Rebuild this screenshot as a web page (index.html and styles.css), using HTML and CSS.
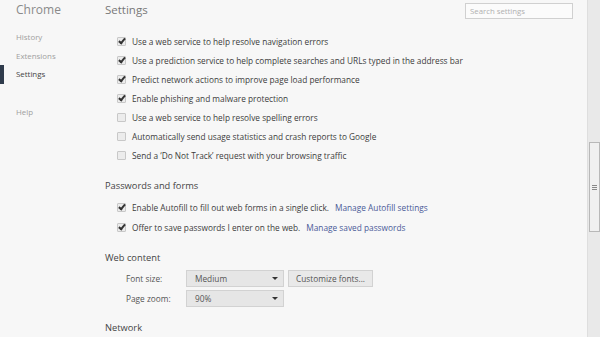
FILE: index.html
```html
<!DOCTYPE html>
<html lang="en">
<head>
  <meta charset="UTF-8" />
  <title>Settings</title>
  <link rel="stylesheet" href="styles.css">
</head>
<body>
  <div class="page">
    <nav class="side">
      <div class="brand">Chrome</div>
      <ul class="nav">
        <li>History</li>
        <li>Extensions</li>
        <li class="active">Settings</li>
        <li class="help">Help</li>
      </ul>
    </nav>

    <main class="main">
      <header class="top">
        <h1>Settings</h1>
        <div class="search">Search settings</div>
      </header>

      <div class="group privacy">
        <div class="row"><span class="box on"></span>Use a web service to help resolve navigation errors</div>
        <div class="row"><span class="box on"></span>Use a prediction service to help complete searches and URLs typed in the address bar</div>
        <div class="row"><span class="box on"></span>Predict network actions to improve page load performance</div>
        <div class="row"><span class="box on"></span>Enable phishing and malware protection</div>
        <div class="row"><span class="box"></span>Use a web service to help resolve spelling errors</div>
        <div class="row"><span class="box"></span>Automatically send usage statistics and crash reports to Google</div>
        <div class="row"><span class="box"></span>Send a ‘Do Not Track’ request with your browsing traffic</div>
      </div>

      <h2>Passwords and forms</h2>
      <div class="group forms">
        <div class="row"><span class="box on"></span>Enable Autofill to fill out web forms in a single click.<a class="link">Manage Autofill settings</a></div>
        <div class="row"><span class="box on"></span>Offer to save passwords I enter on the web.<a class="link">Manage saved passwords</a></div>
      </div>

      <h2>Web content</h2>
      <div class="group content">
        <div class="field">
          <span class="label">Font size:</span>
          <span class="select">Medium<span class="arrow"></span></span>
          <span class="btn">Customize fonts...</span>
        </div>
        <div class="field">
          <span class="label">Page zoom:</span>
          <span class="select">90%<span class="arrow"></span></span>
        </div>
      </div>

      <h2 class="last">Network</h2>
    </main>

    <div class="scrollbar"><div class="thumb"><span class="grip"></span></div></div>
  </div>
</body>
</html>
```

FILE: styles.css
```css
html, body {
  margin: 0;
  height: 100%;
  overflow: hidden;
}
body {
  font-family: "Open Sans", "Noto Sans", sans-serif;
  font-size: 8.3px;
  color: #3c3c3c;
  background: #f7f7f7;
}
.page {
  display: flex;
  height: 337px;
}
.side {
  width: 105px;
  flex: none;
}
.brand {
  padding: 1px 0 0 16px;
  height: 21px;
  line-height: 18px;
  font-size: 12px;
  color: #8a8a8a;
}
.nav {
  list-style: none;
  margin: 6px 0 0;
  padding: 0;
}
.nav li {
  height: 18.5px;
  line-height: 18.5px;
  padding-left: 16px;
  color: #a0a0a0;
  font-size: 7.9px;
}
.nav li.active {
  color: #444;
  padding-left: 12px;
  border-left: 4px solid #2f3b4c;
}
.nav li.help {
  margin-top: 19px;
}
.main {
  flex: 1;
  min-width: 0;
}
.top {
  display: flex;
  align-items: center;
  justify-content: space-between;
  height: 22px;
  padding-right: 14px;
}
h1 {
  margin: 0 0 3px;
  font-weight: normal;
  font-size: 11.5px;
  color: #777;
}
.search {
  width: 98px;
  height: 14px;
  line-height: 14px;
  padding: 0 4px;
  border: 1px solid #d0d0d0;
  background: #fbfbfb;
  color: #b0b0b0;
  font-size: 7.8px;
}
.group {
  padding-left: 12px;
}
.privacy {
  margin-top: 10px;
}
.row {
  display: flex;
  align-items: center;
  height: 19px;
  white-space: nowrap;
}
.forms {
  margin-top: 2px;
}
.forms .row {
  height: 20px;
}
.box {
  width: 7px;
  height: 7px;
  margin-right: 6px;
  border: 1px solid #c8c8c8;
  border-radius: 1px;
  background: #ececec;
  position: relative;
}
.box.on::after {
  content: "";
  position: absolute;
  left: 2px;
  top: -1px;
  width: 2px;
  height: 5px;
  border: solid #333;
  border-width: 0 2px 2px 0;
  transform: rotate(40deg);
}
.link {
  color: #4a5a98;
  margin-left: 6px;
}
h2 {
  margin: 12px 0 0;
  height: 18px;
  line-height: 18px;
  font-weight: normal;
  font-size: 9.3px;
  color: #444;
}
.content {
  margin-top: 1px;
  padding-left: 21px;
}
.field {
  display: flex;
  align-items: center;
  height: 20px;
}
.label {
  width: 60px;
  color: #555;
}
.select {
  display: flex;
  align-items: center;
  justify-content: space-between;
  box-sizing: border-box;
  width: 98px;
  height: 17px;
  padding: 0 5px 0 8px;
  border: 1px solid #d2d2d2;
  background: #e6e6e6;
  color: #555;
}
.arrow {
  width: 0;
  height: 0;
  border: 3px solid transparent;
  border-top: 3px solid #333;
  border-bottom: 0;
}
.btn {
  margin-left: 4px;
  height: 15px;
  line-height: 15px;
  padding: 0 7px;
  border: 1px solid #d2d2d2;
  background: #e9e9e9;
  color: #555;
}
h2.last {
  margin-top: 11px;
}
.scrollbar {
  width: 12px;
  flex: none;
  background: #e9e9e9;
  border-left: 1px solid #dedede;
  padding-top: 142px;
}
.thumb {
  width: 9px;
  height: 88px;
  margin-left: 1px;
  border: 1px solid #b8b8b8;
  background: #f0f0f0;
  display: flex;
  align-items: center;
  justify-content: center;
}
.grip {
  width: 5px;
  height: 5px;
  background: repeating-linear-gradient(#888 0 1px, transparent 1px 2px);
}
```
